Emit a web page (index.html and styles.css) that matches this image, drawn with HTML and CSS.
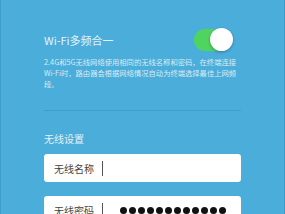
FILE: index.html
```html
<!DOCTYPE html>
<html lang="zh-CN">
<head>
<meta charset="utf-8">
<link rel="stylesheet" href="styles.css">
</head>
<body>
<div class="screen">
  <div class="toggle-row">
    <span class="title">Wi-Fi多频合一</span>
    <span class="switch"><span class="knob"></span></span>
  </div>
  <p class="desc">2.4G和5G无线网络使用相同的无线名称和密码，在终端连接Wi-Fi时，路由器会根据网络情况自动为终端选择最佳上网频段。</p>
  <div class="divider"></div>
  <div class="section">无线设置</div>
  <div class="field">
    <span class="label">无线名称</span>
    <span class="caret"></span>
  </div>
  <div class="field">
    <span class="label">无线密码</span>
    <span class="caret"></span>
    <span class="dots"><i></i><i></i><i></i><i></i><i></i><i></i><i></i><i></i><i></i><i></i><i></i><i></i></span>
  </div>
</div>
</body>
</html>
```
FILE: styles.css
```css
html, body {
  margin: 0;
  padding: 0;
  background: #4badd9;
}
.screen {
  width: 285px;
  height: 214px;
  overflow: hidden;
  box-sizing: border-box;
  padding: 28px 43px 0 43px;
  background: #4badd9;
  border-left: 1px solid #3f9dc9;
  border-right: 1px solid #3f9dc9;
  font-family: "Noto Sans CJK SC", "Noto Sans", sans-serif;
}
.toggle-row {
  display: flex;
  align-items: center;
  justify-content: space-between;
  height: 24px;
}
.title {
  font-size: 11px;
  color: #e4f1f8;
}
.switch {
  position: relative;
  width: 38px;
  height: 22px;
  border-radius: 11px;
  background: #4fd45f;
  margin-right: 9px;
}
.knob {
  position: absolute;
  right: -1px;
  top: -1px;
  width: 23px;
  height: 23px;
  border-radius: 50%;
  background: #ffffff;
  box-shadow: 0 1px 3px rgba(0, 0, 0, 0.3);
}
.desc {
  margin: 5px 0 0 0;
  font-size: 7.3px;
  line-height: 11px;
  color: #d8ebf5;
}
.divider {
  margin-top: 20px;
  height: 1px;
  background: #3f9fcc;
}
.section {
  margin-top: 21px;
  font-size: 10px;
  line-height: 14px;
  color: #e4f1f8;
}
.field {
  margin-top: 8px;
  height: 28px;
  background: #ffffff;
  border-radius: 3px;
  display: flex;
  align-items: center;
  padding-left: 10px;
}
.field + .field {
  margin-top: 14px;
}
.label {
  font-size: 10px;
  color: #444444;
  width: 48px;
}
.caret {
  width: 1px;
  height: 15px;
  background: #555555;
}
.dots {
  display: flex;
  gap: 2px;
  margin-left: 17px;
}
.dots i {
  display: block;
  width: 7px;
  height: 7px;
  border-radius: 50%;
  background: #111111;
}
```
